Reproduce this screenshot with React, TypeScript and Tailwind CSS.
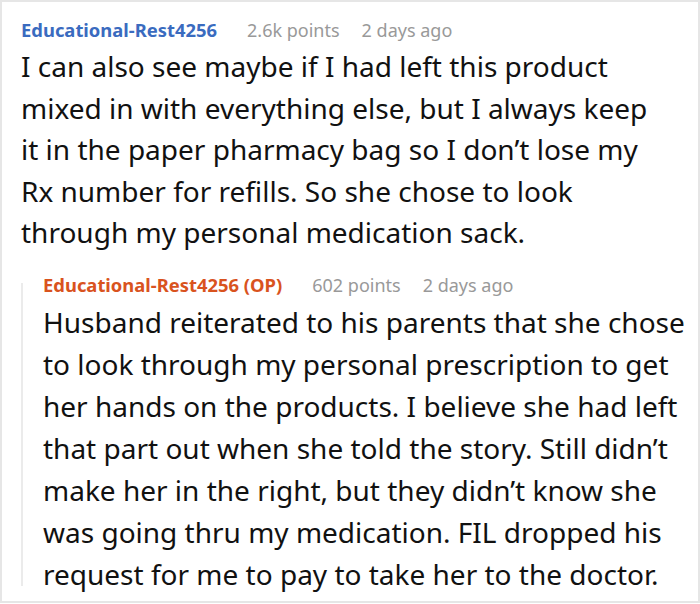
import type { ReactNode } from 'react'

const font = { fontFamily: '"Noto Sans", "Open Sans", sans-serif' }

function CommentHeader({ author, points, age, op }: { author: string; points: string; age: string; op?: boolean }) {
  return (
    <div className="flex items-baseline text-[18px] leading-[24px] mb-[4px]">
      <span className={op ? 'font-bold text-[18.4px] text-[#d9531e]' : 'font-bold text-[18.4px] text-[#3a6bbf]'}>
        {author}
      </span>
      <span className="ml-[30px] text-[#999999]">{points}</span>
      <span className="ml-[22px] text-[#999999]">{age}</span>
    </div>
  )
}

function CommentBody({ children, className }: { children: ReactNode; className: string }) {
  return <p className={`text-[28px] text-[#111111] ${className}`}>{children}</p>
}

export default function App() {
  return (
    <div style={font} className="w-[700px] h-[604px] bg-white">
      <div className="h-[603px] border-2 border-[#e6e6e6] pl-[19px] pr-[10px] pt-[16px] overflow-hidden">
        <CommentHeader author="Educational-Rest4256" points="2.6k points" age="2 days ago" />
        <CommentBody className="leading-[41.5px] w-[640px]">
          I can also see maybe if I had left this product mixed in with everything else, but I always keep it in the
          paper pharmacy bag so I don’t lose my Rx number for refills. So she chose to look through my personal
          medication sack.
        </CommentBody>

        <div className="flex mt-[19px]">
          <div className="w-[2px] bg-[#ebebeb] mt-[10px] mb-[9px] shrink-0" />
          <div className="pl-[20px]">
            <CommentHeader author="Educational-Rest4256 (OP)" points="602 points" age="2 days ago" op />
            <CommentBody className="leading-[42px]">
              Husband reiterated to his parents that she chose to look through my personal prescription to get her hands
              on the products. I believe she had left that part out when she told the story. Still didn’t make her in
              the right, but they didn’t know she was going thru my medication. FIL dropped his request for me to pay to
              take her to the doctor.
            </CommentBody>
          </div>
        </div>
      </div>
    </div>
  )
}
